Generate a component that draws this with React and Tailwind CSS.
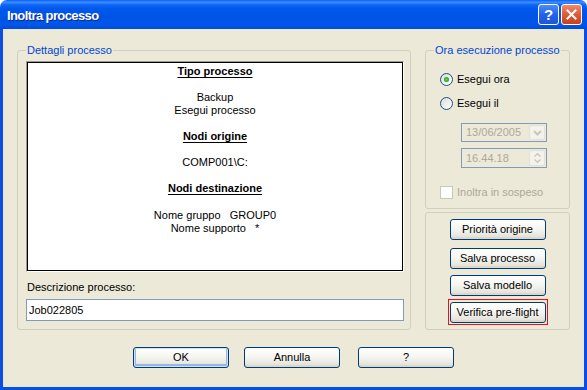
import clsx from "clsx";

// Windows XP style button
const XPButton = ({ children, isDefault, className }) => (
  <button
    className={clsx(
      "h-[21px] w-[96px] shrink-0 rounded-[3px] border border-[#003C74] bg-linear-to-b from-white via-[#F4F4F0] to-[#E0DED4] text-[11px] leading-none text-black",
      isDefault && "shadow-[inset_0_0_0_1px_#CFE0FA,inset_0_-1px_0_2px_#97B6E8]",
      !isDefault && "shadow-[inset_0_-2px_0_0_#DCD7CB]",
      className
    )}
  >
    {children}
  </button>
);

const Radio = ({ checked }) => (
  <span className="flex h-[13px] w-[13px] shrink-0 items-center justify-center rounded-full border border-[#1C5180] bg-linear-to-br from-[#DCDCD7] to-white">
    {checked && (
      <span className="h-[5px] w-[5px] rounded-full bg-[radial-gradient(circle,#6BDC5B_0%,#2AA22A_60%,#1E8A1E_100%)]" />
    )}
  </span>
);

const TitleBar = () => (
  <div className="flex h-[29px] shrink-0 items-center bg-[linear-gradient(180deg,#0A5FFF_0%,#3D8EFF_8%,#1168F5_16%,#0058EE_28%,#0054E3_60%,#0056EC_85%,#004BDA_100%)] pl-[7px] pr-[5px]">
    <span className="flex-1 pt-[1px] text-[13px] font-bold tracking-[-0.6px] text-white [text-shadow:1px_1px_0_#0A2A8A]">
      Inoltra processo
    </span>
    <div className="flex h-[21px] w-[21px] items-center justify-center rounded-[3px] border border-white bg-linear-to-b from-[#4B8CFA] via-[#2462EA] to-[#1E55DA] text-[15px] font-bold text-white">
      ?
    </div>
    <div className="ml-[2px] flex h-[21px] w-[21px] items-center justify-center rounded-[3px] border border-white bg-linear-to-b from-[#EE8A6A] via-[#DD5A34] to-[#C8421E]">
      <svg width="11" height="11" viewBox="0 0 11 11">
        <path d="M1.5 1.5 L9.5 9.5 M9.5 1.5 L1.5 9.5" stroke="white" strokeWidth="2" strokeLinecap="square" />
      </svg>
    </div>
  </div>
);

const Chevron = () => (
  <svg width="9" height="6" viewBox="0 0 9 6">
    <path d="M1 1 L4.5 4.5 L8 1" stroke="#C9C7BA" strokeWidth="2" fill="none" />
  </svg>
);

export default function App() {
  return (
    <div className="h-[390px] w-[587px] bg-white font-['Liberation_Sans',Arial,sans-serif] text-[11px] leading-[13px] text-black">
      <div className="flex h-full w-full flex-col overflow-hidden rounded-t-[7px]">
        <TitleBar />
        <div className="flex flex-1 flex-col border-x-[3px] border-b-[3px] border-[#0A4FE3] bg-[#ECE9D8] pt-[15px]">
          <div className="flex pl-[14px]">
            {/* Dettagli processo */}
            <fieldset className="h-[286px] w-[394px] rounded-[3px] border border-[#D0D0BF] pb-[7px] pl-[8px] pr-[5px] pt-[4px]">
              <legend className="px-[1px] text-[#0046D5]">Dettagli processo</legend>
              <div className="h-[211px] w-[378px] border border-[#9C9A8E] border-b-white border-r-white">
                <div className="flex h-full flex-col items-center border border-black bg-white pt-[2px]">
                  <div className="font-bold underline underline-offset-[2px]">Tipo processo</div>
                  <div className="h-[13px]" />
                  <div>Backup</div>
                  <div>Esegui processo</div>
                  <div className="h-[13px]" />
                  <div className="font-bold underline underline-offset-[2px]">Nodi origine</div>
                  <div className="h-[13px]" />
                  <div>COMP001\C:</div>
                  <div className="h-[13px]" />
                  <div className="font-bold underline underline-offset-[2px]">Nodi destinazione</div>
                  <div className="h-[14px]" />
                  <div className="whitespace-pre">Nome gruppo   GROUP0</div>
                  <div className="whitespace-pre">Nome supporto   *</div>
                </div>
              </div>
              <div className="mt-[9px] pl-[1px]">Descrizione processo:</div>
              <div className="mt-[5px] flex h-[22px] w-[378px] items-center border border-[#7F9DB9] bg-white px-[2px]">
                Job022805
              </div>
            </fieldset>

            <div className="ml-[14px] flex w-[145px] flex-col">
              {/* Ora esecuzione processo */}
              <fieldset className="h-[165px] rounded-[3px] border border-[#D0D0BF] pl-[8px]">
                <legend className="px-[1px] text-[#0046D5]">Ora esecuzione processo</legend>
                <div className="ml-[6px] mt-[16px] flex items-center gap-[4px]">
                  <Radio checked />
                  <span>Esegui ora</span>
                </div>
                <div className="ml-[6px] mt-[11px] flex items-center gap-[4px]">
                  <Radio />
                  <span>Esegui il</span>
                </div>
                <div className="ml-[27px] mt-[13px] flex h-[19px] w-[86px] items-center border border-[#7F9DB9] pl-[4px] pr-[1px] text-[#ACA899]">
                  <span className="flex-1">13/06/2005</span>
                  <span className="flex h-[15px] w-[16px] items-center justify-center rounded-[2px] border border-[#E3E1D5] bg-[#F3F2EC]">
                    <Chevron />
                  </span>
                </div>
                <div className="ml-[27px] mt-[6px] flex h-[20px] w-[86px] items-center border border-[#7F9DB9] pl-[4px] pr-[1px] text-[#ACA899]">
                  <span className="flex-1">16.44.18</span>
                  <span className="flex h-[16px] w-[16px] flex-col items-center justify-center gap-[2px] rounded-[2px] border border-[#E3E1D5] bg-[#F3F2EC]">
                    <svg width="7" height="4" viewBox="0 0 7 4">
                      <path d="M0.5 3.5 L3.5 0.8 L6.5 3.5" stroke="#C9C7BA" strokeWidth="1.4" fill="none" />
                    </svg>
                    <svg width="7" height="4" viewBox="0 0 7 4">
                      <path d="M0.5 0.5 L3.5 3.2 L6.5 0.5" stroke="#C9C7BA" strokeWidth="1.4" fill="none" />
                    </svg>
                  </span>
                </div>
                <div className="ml-[6px] mt-[18px] flex items-center gap-[4px] text-[#ACA899]">
                  <span className="h-[13px] w-[13px] border border-[#CAC8BB] bg-[#FDFDFB]" />
                  <span>Inoltra in sospeso</span>
                </div>
              </fieldset>

              <div className="mt-[3px] flex flex-1 flex-col items-center rounded-[3px] border border-[#D0D0BF] pt-[6px]">
                <XPButton>Priorità origine</XPButton>
                <XPButton className="mt-[8px]">Salva processo</XPButton>
                <XPButton className="mt-[6px]">Salva modello</XPButton>
                <div className="mt-[3px] border border-[#E8101A] px-[1px] pb-[1px] pt-[2px]">
                  <XPButton>Verifica pre-flight</XPButton>
                </div>
              </div>
            </div>
          </div>

          <div className="mt-[17px] flex pl-[130px]">
            <XPButton isDefault>OK</XPButton>
            <XPButton className="ml-[15px]">Annulla</XPButton>
            <XPButton className="ml-[18px]">?</XPButton>
          </div>
        </div>
      </div>
    </div>
  );
}
